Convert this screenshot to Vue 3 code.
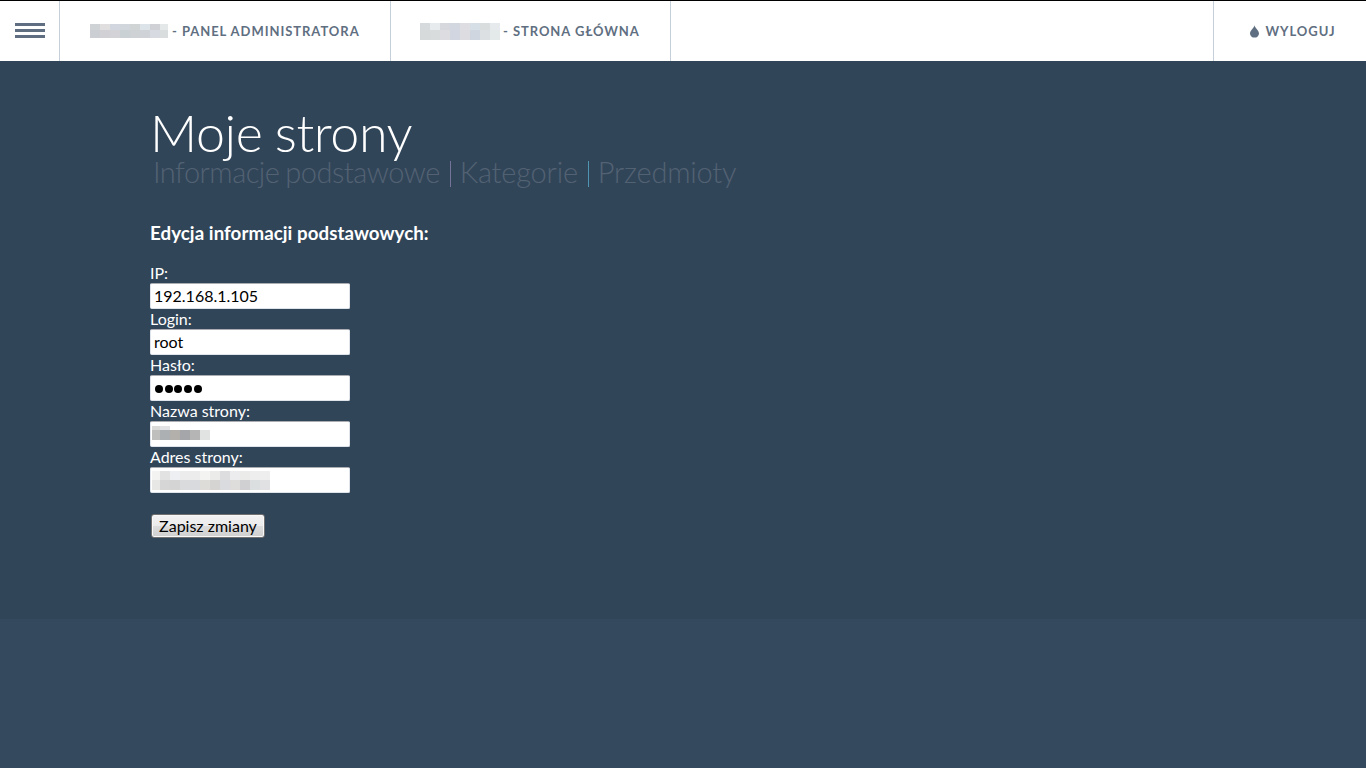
<template>
  <div class="page">
    <header class="topbar">
      <button class="menu-toggle" aria-label="Menu">
        <span></span>
        <span></span>
        <span></span>
      </button>
      <a class="nav-item admin">
        <svg class="mask" width="78" height="14" shape-rendering="crispEdges">
          <rect v-for="(c, i) in adminMask" :key="i" v-bind="c" />
        </svg>
        <span>- Panel administratora</span>
      </a>
      <a class="nav-item home">
        <svg class="mask" width="80" height="17" shape-rendering="crispEdges">
          <rect v-for="(c, i) in homeMask" :key="i" v-bind="c" />
        </svg>
        <span>- Strona główna</span>
      </a>
      <a class="nav-item logout">
        <svg class="drop" width="9" height="13" viewBox="0 0 9 13">
          <path d="M4.5 0.3C4.1 2.7 0 5.6 0 8.6a4.5 4 0 0 0 9 0C9 5.6 4.9 2.7 4.5 0.3z" />
        </svg>
        <span>Wyloguj</span>
      </a>
    </header>

    <main class="content">
      <h1>Moje strony</h1>
      <nav class="tabs">
        <a class="basic">Informacje podstawowe</a>
        <i class="sep violet"></i>
        <a>Kategorie</a>
        <i class="sep teal"></i>
        <a>Przedmioty</a>
      </nav>

      <h3>Edycja informacji podstawowych:</h3>

      <form @submit.prevent>
        <label>IP:</label>
        <input v-model="form.ip" type="text" />
        <label>Login:</label>
        <input v-model="form.login" type="text" />
        <label>Hasło:</label>
        <div class="field">
          <span v-for="n in form.passwordLength" :key="n" class="dot"></span>
        </div>
        <label>Nazwa strony:</label>
        <div class="field masked name">
          <svg width="58" height="14" shape-rendering="crispEdges">
            <rect v-for="(c, i) in nameMask" :key="i" v-bind="c" />
          </svg>
        </div>
        <label>Adres strony:</label>
        <div class="field masked">
          <svg width="118" height="19" shape-rendering="crispEdges">
            <rect v-for="(c, i) in addressMask" :key="i" v-bind="c" />
          </svg>
        </div>
        <button class="save" type="submit">Zapisz zmiany</button>
      </form>
    </main>
  </div>
</template>

<script setup>
import { reactive } from "vue";

const form = reactive({
  ip: "192.168.1.105",
  login: "root",
  passwordLength: 5,
});

// first = width of the first column, the rest are 10px wide
const mosaic = (first, heights, rows) => {
  const cells = [];
  let y = 0;
  rows.forEach((row, r) => {
    row.forEach((fill, i) => {
      cells.push({
        x: i === 0 ? 0 : first + (i - 1) * 10,
        y,
        width: i === 0 ? first : 10,
        height: heights[r],
        fill,
      });
    });
    y += heights[r];
  });
  return cells;
};

const adminMask = mosaic(10, [6, 8], [
  ["#cfd3d6", "#e1dee0", "#d2d7df", "#d1d5dc", "#d0d4d5", "#dce4e9", "#d0d1d7", "#e4e8e8"],
  ["#cbcfd3", "#d0d0d5", "#d2d2d7", "#cad1d5", "#cfd2d5", "#cfd2d7", "#d8dae1", "#d9dddd"],
]);

const homeMask = mosaic(10, [7, 10], [
  ["#d7dadc", "#e7ebed", "#d6d8dd", "#d3d7e0", "#dedee2", "#d6dee6", "#dadddd", "#e6eaec"],
  ["#d7dadb", "#d9dcdd", "#dddde1", "#d1d6e0", "#dddde1", "#d0d6df", "#dce0e2", "#e4e9ea"],
]);

const nameMask = mosaic(8, [4, 10], [
  ["#dadad8", "#e2e3e4"],
  ["#bfbfbe", "#adb0b3", "#b3afab", "#a5a6a9", "#b5b5b6", "#e1e3e3"],
]);

const addressMask = mosaic(8, [9, 10], [
  ["#f3f3f2", "#e2e2e3", "#edeff2", "#ececed", "#ececec", "#f3f3f1", "#ebebe9", "#dddddf", "#ececee", "#ebebe9", "#eeeeee", "#eeeeef"],
  ["#e7e7e6", "#d6d6d7", "#d4d4d5", "#dadbdd", "#d8dadd", "#dddcd8", "#d6d4d3", "#dadbde", "#dfdddb", "#d0d0d2", "#dbdfdf", "#e1e1e4"],
]);
</script>

<style>
body {
  background-color: #34495e;
}
</style>

<style scoped>
.page {
  font-family: Lato, "Liberation Sans", sans-serif;
  font-size: 16px;
  line-height: 20px;
  color: #fff;
}

.topbar {
  display: flex;
  box-sizing: border-box;
  height: 61px;
  border-top: 1px solid #000;
  background-color: #fff;
}

.menu-toggle {
  box-sizing: border-box;
  width: 60px;
  padding: 22px 14px 0 15px;
  border: none;
  border-right: 1px solid #c6d0da;
  background: none;
  display: flex;
  flex-direction: column;
  gap: 3px;
}

.menu-toggle span {
  width: 30px;
  height: 3px;
  background-color: #5f6f81;
}

.nav-item {
  display: flex;
  align-items: center;
  box-sizing: border-box;
  border-right: 1px solid #c6d0da;
  padding-left: 30px;
  color: #5f6f81;
  font-size: 13px;
  font-weight: 700;
  letter-spacing: 0.95px;
  text-transform: uppercase;
  white-space: nowrap;
}

.admin {
  width: 331px;
}

.home {
  width: 280px;
  padding-left: 29px;
}

.mask {
  margin-right: 4px;
}

.home .mask {
  margin-right: 3px;
}

.logout {
  width: 153px;
  margin-left: auto;
  padding-left: 36px;
  border-right: none;
  border-left: 1px solid #c6d0da;
}

.drop {
  margin-right: 6.5px;
  fill: #5f6f81;
}

.content {
  box-sizing: border-box;
  height: 558px;
  padding: 41px 150px 0;
  background-color: #314559;
}

h1 {
  margin: 0;
  font-size: 52px;
  font-weight: 300;
  line-height: 60px;
  letter-spacing: -0.4px;
  word-spacing: -1.5px;
}

.tabs {
  display: flex;
  align-items: center;
  height: 36px;
  margin: -8px 0 0 3px;
  color: #536273;
  font-size: 29px;
  font-weight: 300;
  line-height: 36px;
  letter-spacing: -0.2px;
}

.basic {
  letter-spacing: -0.5px;
  word-spacing: -1.5px;
}

.sep {
  width: 1px;
  height: 26px;
  margin: 3px 9px 0 10px;
}

.violet {
  background-color: #75739a;
}

.teal {
  background-color: #4f94b0;
}

h3 {
  margin: 32px 0 0;
  font-size: 18.72px;
  font-weight: 700;
  line-height: 22px;
  letter-spacing: 0.06px;
}

form {
  display: flex;
  flex-direction: column;
  align-items: flex-start;
  margin-top: 19px;
}

label {
  height: 20px;
}

input,
.field {
  box-sizing: border-box;
  width: 200px;
  height: 26px;
  padding: 0 3px 1px;
  border: 1px solid #dfe3ea;
  border-top-color: #abadb3;
  border-radius: 2px;
  background-color: #fff;
  color: #000;
  font: inherit;
}

.field {
  display: flex;
  align-items: center;
  gap: 1.7px;
  padding-top: 3px;
  padding-left: 4px;
}

.dot {
  width: 8px;
  height: 8px;
  border-radius: 50%;
  background-color: #000;
}

.masked {
  align-items: flex-start;
  padding: 3px 0 0 1px;
}

.name {
  padding-top: 4px;
}

.save {
  box-sizing: border-box;
  width: 114px;
  height: 24px;
  margin: 21px 0 0 1px;
  padding: 0;
  border: 1px solid #707070;
  border-radius: 3px;
  background: linear-gradient(#f2f2f2, #ebebeb 50%, #dddddd 50%, #cfcfcf);
  box-shadow: inset 0 0 0 1px #f8f8f8;
  color: #000;
  font: inherit;
}
</style>
